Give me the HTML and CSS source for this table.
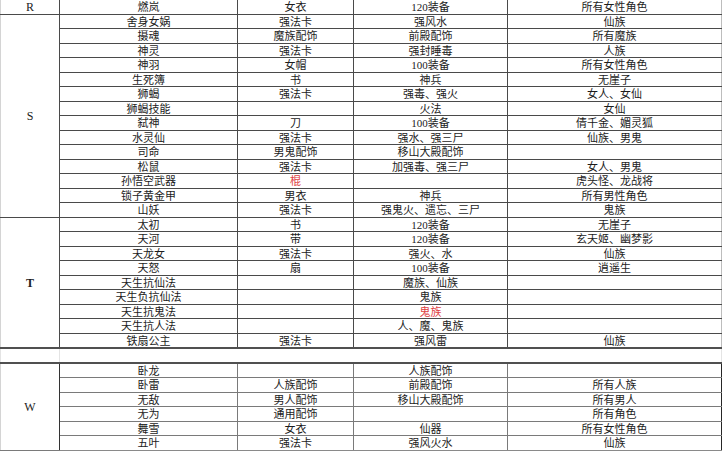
FILE: index.html
```html
<!DOCTYPE html>
<html lang="zh">
<head>
<meta charset="utf-8">
<title>表</title>
<link rel="stylesheet" href="styles.css">
</head>
<body>
<table class="sheet">
  <colgroup>
    <col class="c-letter"><col class="c-name"><col class="c-type"><col class="c-attr"><col class="c-target">
  </colgroup>
  <tbody class="block-top">
    <tr class="row-r"><td class="letter">R</td><td>燃岚</td><td>女衣</td><td>120装备</td><td>所有女性角色</td></tr>
    <tr class="first"><td class="letter" rowspan="14">S</td><td>舍身女娲</td><td>强法卡</td><td>强风水</td><td>仙族</td></tr>
    <tr><td>摄魂</td><td>魔族配饰</td><td>前殿配饰</td><td>所有魔族</td></tr>
    <tr><td>神灵</td><td>强法卡</td><td>强封睡毒</td><td>人族</td></tr>
    <tr><td>神羽</td><td>女帽</td><td>100装备</td><td>所有女性角色</td></tr>
    <tr><td>生死簿</td><td>书</td><td>神兵</td><td>无崖子</td></tr>
    <tr><td>狮蝎</td><td>强法卡</td><td>强毒、强火</td><td>女人、女仙</td></tr>
    <tr><td>狮蝎技能</td><td></td><td>火法</td><td>女仙</td></tr>
    <tr><td>弑神</td><td>刀</td><td>100装备</td><td>倩千金、媚灵狐</td></tr>
    <tr><td>水灵仙</td><td>强法卡</td><td>强水、强三尸</td><td>仙族、男鬼</td></tr>
    <tr><td>司命</td><td>男鬼配饰</td><td>移山大殿配饰</td><td></td></tr>
    <tr><td>松鼠</td><td>强法卡</td><td>加强毒、强三尸</td><td>女人、男鬼</td></tr>
    <tr><td>孙悟空武器</td><td class="red">棍</td><td></td><td>虎头怪、龙战将</td></tr>
    <tr><td>锁子黄金甲</td><td>男衣</td><td>神兵</td><td>所有男性角色</td></tr>
    <tr><td>山妖</td><td>强法卡</td><td>强鬼火、遗忘、三尸</td><td>鬼族</td></tr>
    <tr class="first"><td class="letter bold" rowspan="9">T</td><td>太初</td><td>书</td><td>120装备</td><td>无崖子</td></tr>
    <tr><td>天河</td><td>带</td><td>120装备</td><td>玄天姬、幽梦影</td></tr>
    <tr><td>天龙女</td><td>强法卡</td><td>强火、水</td><td>仙族</td></tr>
    <tr><td>天怒</td><td>扇</td><td>100装备</td><td>逍遥生</td></tr>
    <tr><td>天生抗仙法</td><td></td><td>魔族、仙族</td><td></td></tr>
    <tr><td>天生负抗仙法</td><td></td><td>鬼族</td><td></td></tr>
    <tr><td>天生抗鬼法</td><td></td><td class="red">鬼族</td><td></td></tr>
    <tr><td>天生抗人法</td><td></td><td>人、魔、鬼族</td><td></td></tr>
    <tr><td>铁扇公主</td><td>强法卡</td><td>强风雷</td><td>仙族</td></tr>
  </tbody>
  <tbody class="gap">
    <tr><td></td><td colspan="4"></td></tr>
  </tbody>
  <tbody class="block-w">
    <tr class="first"><td class="letter" rowspan="6">W</td><td>卧龙</td><td></td><td>人族配饰</td><td></td></tr>
    <tr><td>卧雷</td><td>人族配饰</td><td>前殿配饰</td><td>所有人族</td></tr>
    <tr><td>无敌</td><td>男人配饰</td><td>移山大殿配饰</td><td>所有男人</td></tr>
    <tr><td>无为</td><td>通用配饰</td><td></td><td>所有角色</td></tr>
    <tr><td>舞雪</td><td>女衣</td><td>仙器</td><td>所有女性角色</td></tr>
    <tr><td>五叶</td><td>强法卡</td><td>强风火水</td><td>仙族</td></tr>
  </tbody>
</table>
</body>
</html>
```

FILE: styles.css
```css
html, body {
  margin: 0;
  padding: 0;
  background: #ffffff;
}

.sheet {
  border-collapse: collapse;
  table-layout: fixed;
  width: 721px;
  font-family: "Liberation Serif", "Noto Sans CJK SC", serif;
  font-size: 11px;
  color: #1c1c1c;
}

.c-letter { width: 59px; }
.c-name { width: 178px; }
.c-type { width: 116px; }
.c-attr { width: 154px; }
.c-target { width: 214px; }

.sheet td {
  padding: 0;
  height: 13.5px;
  line-height: 12px;
  text-align: center;
  white-space: nowrap;
  overflow: hidden;
  border: 1px solid #4a4a4a;
}

.sheet td.letter {
  border-left: 1px solid #d4d4d4;
  vertical-align: middle;
  font-size: 12px;
}

.sheet td.bold { font-weight: bold; }

.sheet td.red { color: #e0413f; }

.block-top td:last-child { border-right: 1px solid #bdbdbd; }

.row-r td { height: 13.8px; border-top: 0; }

.gap td {
  height: 12.5px;
  border-left: 1px solid #e4e4e4;
  border-right: 1px solid #e4e4e4;
  border-top: 2px solid #505050;
  border-bottom: 2px solid #505050;
}

.block-w td {
  height: 13.5px;
  border-color: #7a7a7a;
}

.block-w td:last-child { border-right: 1px solid #262626; }
.block-w td.letter { border-left: 1px solid #d4d4d4; border-right: 1px solid #333; }
.block-w tr:last-child td { border-bottom: 1px solid #8a8a8a; }
```
